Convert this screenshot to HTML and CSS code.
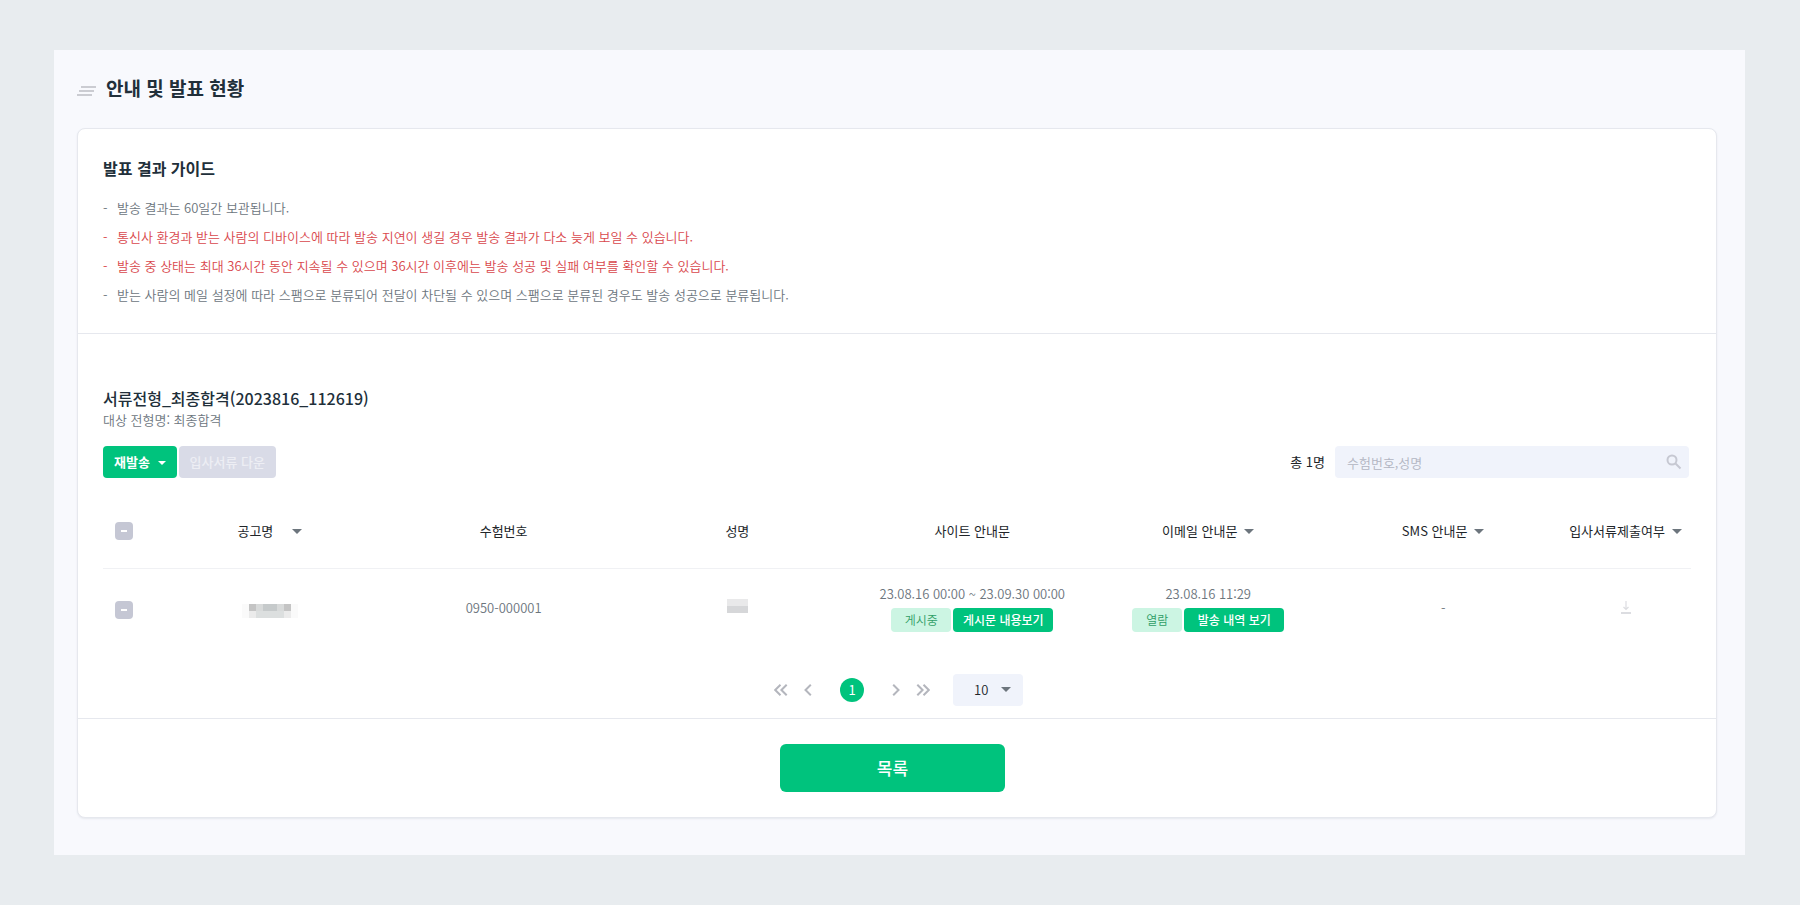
FILE: index.html
```html
<!DOCTYPE html>
<html lang="ko">
<head>
<meta charset="utf-8">
<title>안내 및 발표 현황</title>
<link rel="stylesheet" href="styles.css">
</head>
<body>
<main class="panel">
  <header class="page-head">
    <svg class="page-icon" width="20" height="12" viewBox="0 0 20 12" aria-hidden="true"><path d="M4 2h15M2 6h15M0 10h15" stroke="#cbccd2" stroke-width="2"/></svg>
    <h1 class="page-title">안내 및 발표 현황</h1>
  </header>
  <div class="card">
    <section class="guide">
      <h2 class="guide-title">발표 결과 가이드</h2>
      <ul class="guide-list">
        <li>발송 결과는 60일간 보관됩니다.</li>
        <li class="warn">통신사 환경과 받는 사람의 디바이스에 따라 발송 지연이 생길 경우 발송 결과가 다소 늦게 보일 수 있습니다.</li>
        <li class="warn">발송 중 상태는 최대 36시간 동안 지속될 수 있으며 36시간 이후에는 발송 성공 및 실패 여부를 확인할 수 있습니다.</li>
        <li>받는 사람의 메일 설정에 따라 스팸으로 분류되어 전달이 차단될 수 있으며 스팸으로 분류된 경우도 발송 성공으로 분류됩니다.</li>
      </ul>
    </section>
    <section class="result">
      <h2 class="result-title">서류전형_최종합격(2023816_112619)</h2>
      <p class="result-sub">대상 전형명: 최종합격</p>
      <div class="toolbar">
        <button class="btn btn-primary" type="button">재발송 <span class="caret"></span></button>
        <button class="btn btn-off" type="button" disabled>입사서류 다운</button>
        <label class="total" for="search">총 1명</label>
        <form class="search">
          <input id="search" class="search-input" type="text" placeholder="수험번호,성명">
          <button class="search-btn" type="button" aria-label="검색"><svg width="16" height="16" viewBox="0 0 16 16" fill="none" stroke="#c6c8d2" stroke-width="2"><circle cx="6" cy="6" r="4.5"/><path d="M9.500 9.500l5 5"/></svg></button>
        </form>
      </div>
      <table class="grid">
        <colgroup><col class="col-check"><col><col><col><col class="col-wide"><col class="col-wide"><col><col class="col-file"></colgroup>
        <thead>
          <tr>
            <th><input class="check" type="checkbox" aria-label="전체 선택"></th>
            <th><button class="sort sort-wide" type="button">공고명<span class="caret"></span></button></th>
            <th>수험번호</th>
            <th>성명</th>
            <th>사이트 안내문</th>
            <th><button class="sort" type="button">이메일 안내문<span class="caret"></span></button></th>
            <th><button class="sort" type="button">SMS 안내문<span class="caret"></span></button></th>
            <th><button class="sort" type="button">입사서류제출여부<span class="caret"></span></button></th>
          </tr>
        </thead>
        <tbody>
          <tr>
            <td><input class="check" type="checkbox" aria-label="선택"></td>
            <td><svg class="mask" width="56" height="21" viewBox="0 0 56 21" aria-hidden="true" shape-rendering="crispEdges"><path fill="#fafafa" d="M0 7h56v14H0z"/><path fill="#c4c4c4" d="M7 7h7v7H7zM42 7h7v7h-7z"/><path fill="#d8dada" d="M14 7h7v7h-7zM35 7h7v7h-7z"/><path fill="#c6cacb" d="M21 7h14v7H21z"/><path fill="#ebebeb" d="M7 14h7v7H7zM42 14h7v7h-7z"/><path fill="#dcdfdf" d="M14 14h28v7H14z"/></svg></td>
            <td>0950-000001</td>
            <td><svg class="mask mask-name" width="21" height="14" viewBox="0 0 21 14" aria-hidden="true" shape-rendering="crispEdges"><path fill="#e9e9ea" d="M0 0h21v7H0z"/><path fill="#d6d7d9" d="M0 7h21v7H0z"/></svg></td>
            <td>
              <div class="when">23.08.16 00:00 ~ 23.09.30 00:00</div>
              <div class="tags"><span class="tag tag-long">게시중</span><button class="tag-btn" type="button">게시문 내용보기</button></div>
            </td>
            <td>
              <div class="when">23.08.16 11:29</div>
              <div class="tags"><span class="tag">열람</span><button class="tag-btn" type="button">발송 내역 보기</button></div>
            </td>
            <td>-</td>
            <td><svg class="mask" width="10" height="13" viewBox="0 0 10 13" fill="none" stroke="#dcdde1" aria-hidden="true"><path d="M5 0v8M2.500 6L5 8.500 7.500 6" stroke-width="1.200"/><path d="M0 12h10" stroke-width="2"/></svg></td>
          </tr>
        </tbody>
      </table>
      <nav class="pager" aria-label="페이지">
        <button class="page-nav" type="button" aria-label="처음"><svg width="14" height="12" viewBox="0 0 14 12"><path d="M6.500 .7L1.200 6l5.300 5.300M12.700 .7L7.400 6l5.300 5.300"/></svg></button>
        <button class="page-nav" type="button" aria-label="이전"><svg width="8" height="12" viewBox="0 0 8 12"><path d="M6.800 .7L1.500 6l5.300 5.300"/></svg></button>
        <button class="page-num" type="button">1</button>
        <button class="page-nav" type="button" aria-label="다음"><svg width="8" height="12" viewBox="0 0 8 12"><path d="M1.200 .7L6.500 6l-5.300 5.300"/></svg></button>
        <button class="page-nav" type="button" aria-label="마지막"><svg width="14" height="12" viewBox="0 0 14 12"><path d="M1.300 .7L6.600 6l-5.300 5.300M7.500 .7L12.800 6l-5.300 5.300"/></svg></button>
        <div class="size"><select class="size-select" aria-label="표시 개수"><option>10</option></select><span class="caret size-caret"></span></div>
      </nav>
    </section>
    <footer class="foot"><button class="list-btn" type="button">목록</button></footer>
  </div>
</main>
</body>
</html>
```
FILE: styles.css
```css
* { box-sizing: border-box; }
body {
  margin: 0;
  padding: 50px 55px 50px 54px;
  background: #e8ecef;
  color: #6c757d;
  font: 350 13px/20px "Noto Sans CJK KR", "Noto Sans", sans-serif;
}
h1, h2, p, ul { margin: 0; padding: 0; }
button, input, select { font: inherit; border: 0; margin: 0; }
button { cursor: pointer; padding: 0; }
svg { display: block; }

.panel { background: #f8f9fd; padding: 24px 28px 37px 23px; }
.page-head { display: flex; align-items: center; gap: 9px; height: 30px; margin-bottom: 24px; }
.page-icon { margin-top: 4px; }
.page-title { font-size: 19px; line-height: 28px; padding-bottom: 2px; font-weight: 700; color: #212f3a; }

.card { background: #fff; border: 1px solid #e6e8ee; border-radius: 8px; box-shadow: 0 1px 2px #e6e8ee; }
.guide { padding: 27px 25px 24px; border-bottom: 1px solid #e6e8ee; }
.guide-title { font-size: 16px; line-height: 24px; font-weight: 700; color: #212f3a; margin-bottom: 13px; }
.guide-list { list-style: none; }
.guide-list li { display: flex; line-height: 29px; }
.guide-list li::before { content: "-"; width: 14px; }
.guide-list .warn { color: #d9474c; }

.result { padding: 52px 25px 12px; }
.result-title { font-size: 16px; line-height: 24px; font-weight: 500; color: #212f3a; }
.result-sub { margin-bottom: 16px; }
.toolbar { display: flex; align-items: center; gap: 2px; padding-right: 2px; }
.btn { height: 32px; border-radius: 4px; padding: 0 11px; font-weight: 500; color: #fff; white-space: nowrap; }
.btn-primary { background: #00c37d; font-weight: 700; }
.btn-primary .caret { margin-left: 4px; color: #fff; border-width: 4px 4px 0; }
.btn-off { background: #d9dbe7; color: #edeef4; }
.caret { display: inline-block; border: 5px solid transparent; border-top-color: currentColor; border-bottom: 0; color: #6c757d; vertical-align: middle; }
.total { margin-left: auto; margin-right: 8px; color: #212529; font-weight: 400; }
.search { position: relative; width: 354px; }
.search-input { width: 100%; height: 32px; padding: 0 40px 0 12px; border-radius: 4px; background: #f0f3fb; color: #212529; }
.search-input::placeholder { color: #b2b5c2; }
.search-btn { position: absolute; right: 7px; top: 8px; background: none; }

.grid { width: 100%; margin-top: 15px; table-layout: fixed; border-collapse: collapse; text-align: center; }
.col-check { width: 50px; }
.col-wide { width: 236px; }
.col-file { width: 131px; }
.grid th { height: 75px; padding: 2px 0 0; font-weight: 400; color: #212529; border-bottom: 1px solid #f0f1f4; }
.grid td { height: 81px; padding: 0 0 2px; }
.grid th:first-child, .grid td:first-child { text-align: left; padding: 2px 0 0 12px; }
.sort { display: inline-flex; align-items: center; gap: 7px; background: none; color: inherit; }
.sort-wide { gap: 19px; }
.check { appearance: none; display: grid; place-items: center; width: 18px; height: 18px; border-radius: 4px; background: #c5c7d4; }
.check::before { content: ""; width: 6px; height: 2px; background: #fff; }
.mask { margin: 0 auto; }
.mask-name { margin-bottom: 4px; }
.when { line-height: 20px; }
.tags { display: flex; justify-content: center; gap: 2px; margin-top: 4px; }
.tag, .tag-btn { height: 24px; border-radius: 4px; font-size: 12px; line-height: 24px; }
.tag { width: 50px; background: #ccf5e3; color: #2f9e66; }
.tag-long { width: 60px; }
.tag-btn { width: 100px; background: #00c37d; color: #fff; font-weight: 500; }

.pager { display: flex; justify-content: center; align-items: center; gap: 16px; margin-top: 25px; padding-left: 3px; }
.page-nav { background: none; }
.page-nav path { fill: none; stroke: #b4b6bd; stroke-width: 2; }
.page-num { width: 24px; height: 24px; margin: 0 12px; border-radius: 50%; background: #00c37d; color: #fff; font-weight: 400; }
.size { position: relative; margin-left: 7px; }
.size-select { appearance: none; width: 70px; height: 32px; padding: 0 0 0 21px; border-radius: 4px; background: #f0f3fb; color: #212529; }
.size-caret { position: absolute; right: 12px; top: 13px; pointer-events: none; }

.foot { display: flex; justify-content: center; padding: 25px 24px 25px 15px; border-top: 1px solid #e6e8ee; }
.list-btn { width: 225px; height: 48px; border-radius: 6px; background: #00c37d; color: #fff; font-size: 17px; font-weight: 500; }
```
